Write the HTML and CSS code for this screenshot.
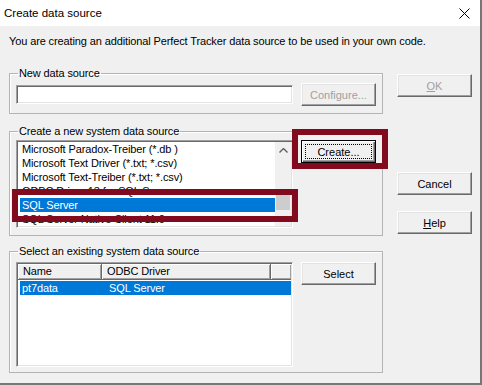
FILE: index.html
```html
<!DOCTYPE html>
<html lang="en">

<head>
    <meta charset="UTF-8">
    <meta name="viewport" content="width=device-width, initial-scale=1.0">
    <title>Create data source</title>
    <link rel="stylesheet" href="styles.css">
</head>

<body>
    <div class="Window">
        <div class="TitleBar">
            <span class="Title">Create data source</span>
            <svg class="CloseIcon" width="11" height="11" viewBox="0 0 11 11">
                <path d="M0.5 0.5 L10.5 10.5 M10.5 0.5 L0.5 10.5" stroke="#000" stroke-width="1" fill="none" />
            </svg>
        </div>

        <div class="Content">
            <p class="Intro">You are creating an additional Perfect Tracker data source to be used in your own code.</p>

            <div class="Main">
                <div class="Groups">
                    <fieldset class="Group GroupNew">
                        <legend>New data source</legend>
                        <div class="GroupRow GroupRowCenter">
                            <input class="TextBox" type="text">
                            <button class="Btn" disabled>Configure...</button>
                        </div>
                    </fieldset>

                    <fieldset class="Group GroupCreate">
                        <legend>Create a new system data source</legend>
                        <div class="GroupRow">
                            <div class="ListBox">
                                <ul class="ListItems">
                                    <li>Microsoft Paradox-Treiber (*.db )</li>
                                    <li>Microsoft Text Driver (*.txt; *.csv)</li>
                                    <li>Microsoft Text-Treiber (*.txt; *.csv)</li>
                                    <li>ODBC Driver 13 for SQL Server</li>
                                    <li class="Selected">SQL Server</li>
                                    <li>SQL Server Native Client 11.0</li>
                                </ul>
                                <div class="ScrollBar">
                                    <div class="ScrollArrow">
                                        <svg width="9" height="5" viewBox="0 0 9 5">
                                            <path d="M0.5 4.5 L4.5 0.5 L8.5 4.5" stroke="#606060" stroke-width="1.4" fill="none" />
                                        </svg>
                                    </div>
                                    <div class="ScrollTrack">
                                        <div class="ScrollThumb"></div>
                                    </div>
                                    <div class="ScrollArrow">
                                        <svg width="9" height="5" viewBox="0 0 9 5">
                                            <path d="M0.5 0.5 L4.5 4.5 L8.5 0.5" stroke="#606060" stroke-width="1.4" fill="none" />
                                        </svg>
                                    </div>
                                </div>
                            </div>
                            <button class="Btn BtnDefault"><span class="Focus">Create...</span></button>
                        </div>
                    </fieldset>

                    <fieldset class="Group GroupSelect">
                        <legend>Select an existing system data source</legend>
                        <div class="GroupRow">
                            <div class="ListView">
                                <div class="ListHeader">
                                    <div class="HeaderCell ColName">Name</div>
                                    <div class="HeaderCell ColDriver">ODBC Driver</div>
                                    <div class="HeaderCell ColFill"></div>
                                </div>
                                <div class="ListRow Selected">
                                    <span class="CellName">pt7data</span>
                                    <span class="CellDriver">SQL Server</span>
                                </div>
                            </div>
                            <button class="Btn">Select</button>
                        </div>
                    </fieldset>
                </div>

                <div class="Side">
                    <button class="Btn BtnOk" disabled><u>O</u>K</button>
                    <button class="Btn BtnCancel">Cancel</button>
                    <button class="Btn BtnHelp"><u>H</u>elp</button>
                </div>
            </div>
        </div>

        <!-- annotation frames -->
        <div class="Mark MarkCreate"></div>
        <div class="Mark MarkSql"></div>
    </div>
</body>

</html>
```

FILE: styles.css
```css
body {
    margin: 0;
    font-family: 'Liberation Sans', Arial, sans-serif;
    font-size: 11px;
    letter-spacing: -0.12px;
    background-color: #f0f0f0;
}

.Window {
    position: relative;
    width: 480px;
    height: 383px;
    background: #f0f0f0;
    border-right: 2px solid #777777;
    border-bottom: 2px solid #777777;
    overflow: hidden;
}

.TitleBar {
    height: 26px;
    background: #ffffff;
    display: flex;
    align-items: center;
    justify-content: space-between;
    padding: 0 10px 0 4px;
}

.Title {
    font-size: 11.5px;
    letter-spacing: 0;
    color: #000000;
}

.Content {
    padding: 9px 0 0 9px;
}

.Intro {
    margin: 0;
    line-height: 13px;
    color: #000000;
}

.Main {
    display: flex;
    gap: 14px;
    margin-top: 19px;
}

.Groups {
    display: flex;
    flex-direction: column;
    width: 374px;
}

.Group {
    margin: 0;
    padding: 3px 6px 7px 6px;
    border: 1px solid #b4b4b4;
    box-shadow: inset 1px 1px #ffffff;
    min-width: 0;
}

.Group legend {
    margin-left: 2px;
    padding: 0 1px;
    line-height: 13px;
    color: #000000;
}

.GroupCreate {
    margin-top: 11px;
    padding-top: 2px;
}

.GroupSelect {
    margin-top: 9px;
    padding-top: 4px;
    padding-bottom: 5px;
}

.GroupRow {
    display: flex;
    align-items: flex-start;
    gap: 8px;
}

.GroupRowCenter {
    align-items: center;
}

.TextBox {
    width: 277px;
    height: 19px;
    margin: 0;
    padding: 0 3px;
    box-sizing: border-box;
    background: #ffffff;
    border: 1px solid;
    border-color: #a0a0a0 #ffffff #ffffff #a0a0a0;
    box-shadow: inset 1px 1px #696969, inset -1px -1px #e3e3e3;
    font: inherit;
    outline: none;
}

.Btn {
    width: 75px;
    height: 23px;
    margin: 0;
    padding: 0;
    box-sizing: border-box;
    background: #f0f0f0;
    border: 1px solid;
    border-color: #ffffff #696969 #696969 #ffffff;
    box-shadow: inset -1px -1px #a0a0a0, inset 1px 1px #e3e3e3;
    font: inherit;
    color: #000000;
    flex-shrink: 0;
}

.Btn:disabled {
    color: #a0a0a0;
}

.BtnDefault {
    border: 1px solid #000000;
    box-shadow: inset 1px 1px #ffffff, inset -1px -1px #696969, inset -2px -2px #a0a0a0;
    padding: 3px;
    display: flex;
}

.Focus {
    flex: 1;
    display: flex;
    align-items: center;
    justify-content: center;
    border: 1px dotted #000000;
}

.ListBox {
    width: 277px;
    height: 88px;
    box-sizing: border-box;
    display: flex;
    background: #ffffff;
    border: 1px solid;
    border-color: #a0a0a0 #ffffff #ffffff #a0a0a0;
    box-shadow: inset 1px 1px #696969, inset -1px -1px #e3e3e3;
    padding: 1px;
    overflow: hidden;
}

.ListItems {
    list-style: none;
    margin: 0;
    padding: 0 0 0 2px;
    width: 257px;
    box-sizing: border-box;
    overflow: hidden;
}

.ListItems li {
    height: 14px;
    line-height: 14px;
    padding-left: 2px;
    white-space: nowrap;
    color: #000000;
}

.Selected {
    background: #0078d7;
    color: #ffffff !important;
}

.ScrollBar {
    width: 16px;
    display: flex;
    flex-direction: column;
    background: #f0f0f0;
}

.ScrollArrow {
    height: 16px;
    display: flex;
    align-items: center;
    justify-content: center;
}

.ScrollTrack {
    flex: 1;
    display: flex;
    flex-direction: column;
    justify-content: flex-end;
    padding: 0 1px;
}

.ScrollThumb {
    height: 15px;
    background: #cdcdcd;
}

.ListView {
    width: 277px;
    height: 105px;
    box-sizing: border-box;
    background: #ffffff;
    border: 1px solid;
    border-color: #a0a0a0 #ffffff #ffffff #a0a0a0;
    box-shadow: inset 1px 1px #696969, inset -1px -1px #e3e3e3;
    padding: 1px;
}

.ListHeader {
    display: flex;
    height: 16px;
}

.HeaderCell {
    box-sizing: border-box;
    height: 16px;
    line-height: 14px;
    padding-left: 5px;
    background: #f0f0f0;
    border-right: 1px solid #696969;
    border-bottom: 1px solid #696969;
    box-shadow: inset 1px 1px #ffffff, inset -1px -1px #a0a0a0;
    color: #000000;
}

.ColName {
    width: 84px;
}

.ColDriver {
    width: 169px;
}

.ColFill {
    flex: 1;
    border-right: none;
}

.ListRow {
    display: flex;
    height: 14px;
    line-height: 14px;
    margin: 1px 0 0 2px;
}

.CellName {
    width: 84px;
    padding-left: 2px;
}

.CellDriver {
    padding-left: 3px;
}

.Side {
    display: flex;
    flex-direction: column;
}

.BtnOk {
    margin-top: 7px;
}

.BtnCancel {
    margin-top: 75px;
}

.BtnHelp {
    margin-top: 16px;
}

.Mark {
    position: absolute;
    border: 6px solid #820a1e;
    box-sizing: border-box;
}

.MarkCreate {
    left: 292px;
    top: 129px;
    width: 96px;
    height: 40px;
}

.MarkSql {
    left: 12px;
    top: 189px;
    width: 286px;
    height: 33px;
}
```
